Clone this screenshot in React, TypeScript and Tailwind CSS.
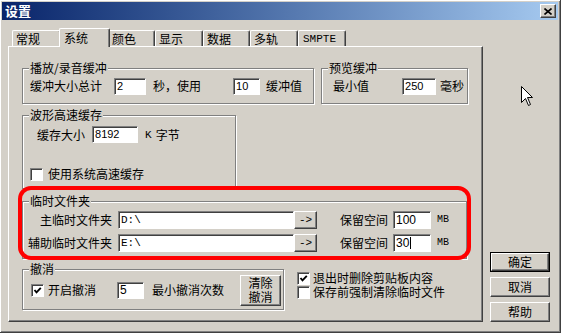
import type { ReactNode } from "react";

const cjk = "[font-family:'Noto_Sans_CJK_SC',sans-serif]";
const mono = "[font-family:'Liberation_Mono',monospace]";
const num = "[font-family:'Liberation_Sans',sans-serif]";

const tabs = [
  { label: "常规", w: "w-[49px]" },
  { label: "系统", w: "w-[51px]", active: true },
  { label: "颜色", w: "w-[47px]" },
  { label: "显示", w: "w-[48px]" },
  { label: "数据", w: "w-[47px]" },
  { label: "多轨", w: "w-[48px]" },
  { label: "SMPTE", w: "w-[48px]", latin: true },
];

const raised =
  "border border-t-white border-l-white border-b-[#404040] border-r-[#404040] shadow-[inset_-1px_-1px_0_#808080] bg-[#d4d0c8]";
const sunken =
  "border border-t-[#808080] border-l-[#808080] border-b-white border-r-white shadow-[inset_1px_1px_0_#404040] bg-white";

function Group({ title, className, children }: { title: string; className: string; children?: ReactNode }) {
  return (
    <div className={`relative border border-[#808080] shadow-[inset_1px_1px_0_#fff,1px_1px_0_#fff] ${className}`}>
      <span className="absolute -top-[8px] left-[6px] block bg-[#d4d0c8] px-[1px] leading-[14px]">{title}</span>
      {children}
    </div>
  );
}

function Field({ className, value, font = num, caret }: { className: string; value: string; font?: string; caret?: boolean }) {
  return (
    <div className={`flex items-center pl-[2px] text-[11px] ${sunken} ${font} ${className}`}>
      <span className="block leading-[13px]">{value}</span>
      {caret && <span className="ml-[1px] h-[12px] w-px bg-black" />}
    </div>
  );
}

function Check({ on }: { on?: boolean }) {
  return (
    <div className={`flex h-[13px] w-[13px] shrink-0 items-center justify-center ${sunken}`}>
      {on && (
        <svg width="9" height="9" viewBox="0 0 9 9">
          <path d="M1.5 4 L3.5 6.3 L7.8 1.8" fill="none" stroke="#000" strokeWidth="1.9" />
        </svg>
      )}
    </div>
  );
}

function Button({ children, className, isDefault }: { children: ReactNode; className: string; isDefault?: boolean }) {
  if (isDefault) {
    return (
      <div className={`border border-black ${className}`}>
        <div className={`flex h-full w-full items-center justify-center ${raised}`}>{children}</div>
      </div>
    );
  }
  return <div className={`flex items-center justify-center ${raised} ${className}`}>{children}</div>;
}

export default function App() {
  return (
    <div
      className={`relative flex h-[333px] w-[561px] flex-col overflow-hidden border-r border-b border-[#404040] bg-[#d4d0c8] text-[12px] leading-[14px] text-black shadow-[inset_1px_1px_0_#fff,inset_-1px_-1px_0_#808080] ${cjk}`}
    >
      {/* title bar */}
      <div className="mx-[2px] mt-[2px] flex h-[18px] shrink-0 items-center justify-between bg-gradient-to-r from-[#0a246a] to-[#a6caf0] pl-[3px] pr-[2px]">
        <span className="block text-[13px] font-bold leading-[16px] text-white">设置</span>
        <div className={`flex h-[14px] w-[16px] items-center justify-center ${raised}`}>
          <svg width="8" height="7" viewBox="0 0 8 7">
            <path d="M0.5 0.5 L7.5 6.5 M7.5 0.5 L0.5 6.5" stroke="#000" strokeWidth="1.6" />
          </svg>
        </div>
      </div>

      <div className="flex pl-[8px] pt-[8px]">
        <div className="flex w-[475px] flex-col">
          {/* tabs */}
          <div className="flex h-[18px] items-end pl-[4px]">
            {tabs.map((t) =>
              t.active ? (
                <div
                  key={t.label}
                  className={`relative z-10 -mb-[1px] -ml-[2px] -mr-[2px] flex h-[19px] items-start rounded-t-[2px] border-t border-l border-r border-t-white border-l-white border-r-[#404040] bg-[#d4d0c8] pl-[4px] pt-[2px] shadow-[inset_-1px_0_0_#808080] ${t.w}`}
                >
                  {t.label}
                </div>
              ) : (
                <div
                  key={t.label}
                  className={`flex h-[16px] items-center rounded-t-[2px] border-t border-l border-r border-t-white border-l-white border-r-[#404040] pl-[3px] shadow-[inset_-1px_0_0_#808080] ${t.w} ${t.latin ? `${mono} pl-[4px] text-[11px]` : ""}`}
                >
                  {t.label}
                </div>
              )
            )}
          </div>

          {/* panel */}
          <div className="flex h-[276px] flex-col border border-t-white border-l-white border-b-[#404040] border-r-[#404040] pl-[13px] pt-[21px] shadow-[inset_-1px_-1px_0_#808080]">
            <div className="flex">
              <Group title="播放/录音缓冲" className="flex h-[36px] w-[292px] items-center pl-[7px]">
                <span className="block">缓冲大小总计</span>
                <Field className="ml-[12px] h-[17px] w-[32px]" value="2" />
                <span className="ml-[7px] block w-[80px]">秒，使用</span>
                <Field className="h-[17px] w-[27px]" value="10" />
                <span className="ml-[6px] block">缓冲值</span>
              </Group>
              <Group title="预览缓冲" className="ml-[7px] flex h-[36px] w-[147px] items-center pl-[11px]">
                <span className="block">最小值</span>
                <Field className="ml-[33px] h-[17px] w-[34px]" value="250" />
                <span className="ml-[4px] block">毫秒</span>
              </Group>
            </div>

            <Group title="波形高速缓存" className="mt-[11px] flex h-[74px] w-[214px] flex-col pl-[7px] pt-[10px]">
              <div className="ml-[7px] flex items-center">
                <span className="block">缓存大小</span>
                <Field className="ml-[7px] h-[17px] w-[46px]" value="8192" />
                <span className={`ml-[7px] block text-[11px] ${mono}`}>K</span>
                <span className="ml-[4px] block">字节</span>
              </div>
              <div className="mt-[24px] flex items-center">
                <Check />
                <span className="ml-[5px] block">使用系统高速缓存</span>
              </div>
            </Group>

            <Group title="临时文件夹" className="mt-[12px] flex h-[58px] w-[445px] flex-col gap-[5px] pt-[9px]">
              {[
                { label: "主临时文件夹", path: "D:\\", keep: "100" },
                { label: "辅助临时文件夹", path: "E:\\", keep: "30" },
              ].map((r, i) => (
                <div key={r.label} className="flex h-[18px] items-center">
                  <span className="block w-[92px] pr-[3px] text-right">{r.label}</span>
                  <Field className="ml-[3px] h-[18px] w-[176px]" value={r.path} font={mono} />
                  <Button className={`h-[18px] w-[23px] text-[11px] ${mono}`}>-&gt;</Button>
                  <span className="ml-[23px] block">保留空间</span>
                  <Field className="ml-[5px] h-[18px] w-[38px] text-[12px]" value={r.keep} caret={i === 1} />
                  <span className={`ml-[6px] block text-[10px] ${mono}`}>MB</span>
                </div>
              ))}
            </Group>

            <div className="mt-[10px] flex items-start">
              <Group title="撤消" className="flex h-[41px] w-[262px] items-center pl-[8px] pt-[1px]">
                <Check on />
                <span className="ml-[4px] block">开启撤消</span>
                <Field className="ml-[21px] h-[17px] w-[27px] text-[12px]" value="5" />
                <span className="ml-[8px] block">最小撤消次数</span>
                <Button className="ml-[16px] h-[31px] w-[41px] flex-col leading-[14px]">
                  <span>清除</span>
                  <span>撤消</span>
                </Button>
              </Group>
              <div className="ml-[13px] flex flex-col pt-[2px]">
                <div className="flex h-[14px] items-center">
                  <Check on />
                  <span className="ml-[3px] block leading-[14px]">退出时删除剪贴板内容</span>
                </div>
                <div className="flex h-[14px] items-center">
                  <Check />
                  <span className="ml-[3px] block leading-[14px]">保存前强制清除临时文件</span>
                </div>
              </div>
            </div>
          </div>
        </div>

        {/* dialog buttons */}
        <div className="ml-[7px] flex flex-col justify-end gap-[5px]">
          <Button className="h-[20px] w-[60px]" isDefault>
            确定
          </Button>
          <Button className="h-[20px] w-[60px]">取消</Button>
          <Button className="h-[20px] w-[60px]">帮助</Button>
        </div>
      </div>

      {/* red annotation */}
      <div className="pointer-events-none absolute left-[18px] top-[186px] z-20 h-[74px] w-[453px] rounded-[13px] border-[4px] border-[#f00]" />

      {/* mouse cursor */}
      <svg className="absolute left-[521px] top-[86px] z-20" width="13" height="21" viewBox="0 0 13 21">
        <path d="M0.5 0.5 V16.5 L4.5 12.5 L7.5 19.5 L9.5 18.5 L6.5 11.5 H11.5 Z" fill="#fff" stroke="#000" strokeWidth="1" />
      </svg>
    </div>
  );
}
